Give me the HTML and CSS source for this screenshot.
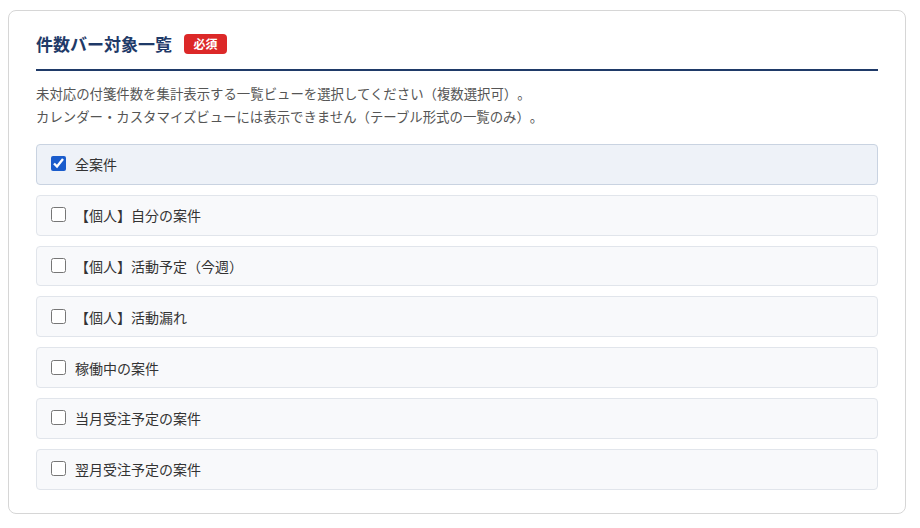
FILE: index.html
```html
<!DOCTYPE html>
<html lang="ja">
<head>
    <meta charset="UTF-8">
    <meta name="viewport" content="width=device-width, initial-scale=1.0">
    <title>件数バー対象一覧</title>
    <link rel="stylesheet" href="styles.css">
</head>
<body>
    <div class="card">
      <div class="card-header">
        <h2 class="card-title">件数バー対象一覧</h2>
        <span class="badge">必須</span>
      </div>
      <p class="desc">
        未対応の付箋件数を集計表示する一覧ビューを選択してください（複数選択可）。<br>
        カレンダー・カスタマイズビューには表示できません（テーブル形式の一覧のみ）。
      </p>
      <div class="view-list">
        <label class="view-item checked"><input type="checkbox" checked> 全案件</label>
        <label class="view-item"><input type="checkbox"> 【個人】自分の案件</label>
        <label class="view-item"><input type="checkbox"> 【個人】活動予定（今週）</label>
        <label class="view-item"><input type="checkbox"> 【個人】活動漏れ</label>
        <label class="view-item"><input type="checkbox"> 稼働中の案件</label>
        <label class="view-item"><input type="checkbox"> 当月受注予定の案件</label>
        <label class="view-item"><input type="checkbox"> 翌月受注予定の案件</label>
      </div>
    </div>
</body>
</html>
```

FILE: styles.css
```css
* {
    box-sizing: border-box;
    margin: 0;
    padding: 0;
}

body {
    font-family: "Noto Sans CJK JP", "Noto Sans", sans-serif;
    background: #fff;
    color: #333;
    padding: 10px 14px 0 8px;
    text-spacing-trim: space-all;
}

.card {
    width: 898px;
    background: #fff;
    border: 1px solid #d6d6d6;
    border-radius: 8px;
    padding: 23px 27px 23px;
}

.card-header {
    display: flex;
    align-items: center;
    gap: 12px;
    height: 20px;
    padding-bottom: 15px;
    border-bottom: 2px solid #1f3a68;
    box-sizing: content-box;
}

.card-title {
    font-size: 17px;
    font-weight: 700;
    color: #1f3a68;
    line-height: 20px;
}

.badge {
    background: #dc2828;
    color: #fff;
    font-size: 12px;
    font-weight: 700;
    line-height: 20px;
    padding: 0 9.5px;
    border-radius: 4px;
}

.desc {
    margin-top: 11px;
    font-size: 13.4px;
    line-height: 23px;
    color: #555;
}

.view-list {
    display: flex;
    flex-direction: column;
    gap: 10px;
    margin-top: 16px;
}

.view-item {
    display: flex;
    align-items: center;
    gap: 9px;
    height: 40.8px;
    padding: 0 14px;
    background: #f8f9fb;
    border: 1px solid #e1e5eb;
    border-radius: 4px;
    font-size: 14px;
    line-height: 18px;
    color: #333;
    cursor: pointer;
}

.view-item.checked {
    background: #eef2f8;
    border-color: #c9d3e1;
}

.view-item input {
    width: 15px;
    height: 15px;
    margin: 0 0 1px;
    accent-color: #1a5ccc;
}
```
